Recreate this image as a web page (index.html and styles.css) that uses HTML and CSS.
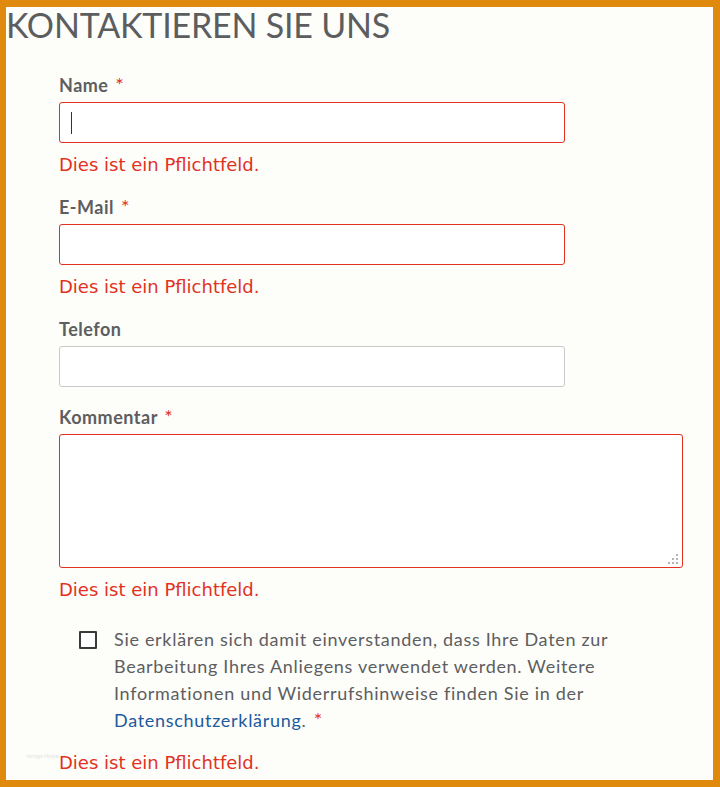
FILE: index.html
```html
<!DOCTYPE html>
<html lang="de">

<head>
  <meta charset="UTF-8">
  <meta name="viewport" content="width=device-width, initial-scale=1.0">
  <title>Kontaktieren Sie uns</title>
  <link rel="stylesheet" href="styles.css">
</head>

<body>
  <div class="frame">
    <h1 class="title">KONTAKTIEREN SIE UNS</h1>
    <form class="form">
      <div class="field">
        <label class="label" for="name">Name <span class="req">*</span></label>
        <div class="control">
          <input type="text" id="name" class="input invalid">
          <span class="caret"></span>
        </div>
        <p class="error">Dies ist ein Pflichtfeld.</p>
      </div>
      <div class="field">
        <label class="label" for="email">E-Mail <span class="req">*</span></label>
        <input type="email" id="email" class="input invalid">
        <p class="error">Dies ist ein Pflichtfeld.</p>
      </div>
      <div class="field">
        <label class="label" for="phone">Telefon</label>
        <input type="tel" id="phone" class="input">
      </div>
      <div class="field">
        <label class="label" for="comment">Kommentar <span class="req">*</span></label>
        <div class="control">
          <textarea id="comment" class="textarea invalid"></textarea>
          <svg class="grip" width="12" height="12" viewBox="0 0 12 12">
            <rect x="9" y="1" width="2" height="2" fill="#b5b5b5" />
            <rect x="5" y="5" width="2" height="2" fill="#b5b5b5" />
            <rect x="9" y="5" width="2" height="2" fill="#b5b5b5" />
            <rect x="1" y="9" width="2" height="2" fill="#b5b5b5" />
            <rect x="5" y="9" width="2" height="2" fill="#b5b5b5" />
            <rect x="9" y="9" width="2" height="2" fill="#b5b5b5" />
          </svg>
        </div>
        <p class="error">Dies ist ein Pflichtfeld.</p>
      </div>
      <div class="consent">
        <input type="checkbox" id="privacy" class="checkbox">
        <label class="consentText" for="privacy">
          Sie erklären sich damit einverstanden, dass Ihre Daten zur<br>
          Bearbeitung Ihres Anliegens verwendet werden. Weitere<br>
          Informationen und Widerrufshinweise finden Sie in der<br>
          <a class="link" href="#">Datenschutzerklärung</a>. <span class="req">*</span>
        </label>
      </div>
      <p class="error last">Dies ist ein Pflichtfeld.</p>
    </form>
    <span class="watermark">Vorlage Muster</span>
  </div>
</body>

</html>
```

FILE: styles.css
```css
html,
body {
  margin: 0;
  padding: 0;
  background-color: #df8a0d;
}

* {
  box-sizing: border-box;
}

.frame {
  position: relative;
  height: 787px;
  margin: 0;
  border-top: 7px solid #df8a0d;
  border-bottom: 7px solid #df8a0d;
  border-left: 6px solid #df8a0d;
  border-right: 7px solid #df8a0d;
  background-color: #fdfdfa;
  overflow: hidden;
  color: #5d5e60;
  font-family: Lato, "Open Sans", sans-serif;
}

.title {
  margin: 0;
  font-size: 34px;
  line-height: 36px;
  font-weight: 400;
  letter-spacing: -0.2px;
  color: #5c5d5f;
}

.form {
  padding: 30px 0 0 53px;
}

.field {
  margin-bottom: 18px;
}

.label {
  display: block;
  margin-bottom: 5px;
  font-size: 18px;
  line-height: 24px;
  font-weight: 700;
  letter-spacing: 0.5px;
  color: #5d5e60;
}

.req {
  color: #e0321f;
  font-weight: 400;
  font-size: 20px;
  line-height: 0;
  margin-left: 2px;
}

.control {
  position: relative;
}

.input {
  display: block;
  width: 506px;
  height: 41px;
  padding: 0 12px;
  border: 1px solid #c9c9c9;
  border-radius: 3px;
  background-color: #fff;
  outline: none;
  font-size: 16px;
}

.textarea {
  display: block;
  width: 624px;
  height: 134px;
  padding: 8px 12px;
  border: 1px solid #c9c9c9;
  border-radius: 3px;
  background-color: #fff;
  outline: none;
  resize: none;
  font-size: 16px;
}

.invalid {
  border-color: #e0321f;
}

.caret {
  position: absolute;
  left: 12px;
  top: 10px;
  width: 1px;
  height: 22px;
  background-color: #333;
}

.grip {
  position: absolute;
  left: 608px;
  bottom: 3px;
}

.error {
  margin: 10px 0 0;
  font-family: "DejaVu Sans", "Noto Sans", sans-serif;
  font-size: 18px;
  line-height: 24px;
  color: #e0321f;
}

.consent {
  display: flex;
  align-items: flex-start;
  gap: 17px;
  margin: 24px 0 0 20px;
}

.checkbox {
  appearance: none;
  flex: none;
  width: 18px;
  height: 18px;
  margin: 5px 0 0;
  border: 2px solid #3a3a3a;
  border-radius: 1px;
  background-color: #fff;
}

.consentText {
  font-size: 18px;
  line-height: 27px;
  font-weight: 400;
  letter-spacing: 0.7px;
  color: #5d5e60;
  white-space: nowrap;
}

.link {
  color: #1d5a9d;
  text-decoration: none;
}

.error.last {
  margin-top: 17px;
}

.watermark {
  position: absolute;
  left: 20px;
  top: 746px;
  font-size: 5px;
  color: #e4e4e2;
}
```
